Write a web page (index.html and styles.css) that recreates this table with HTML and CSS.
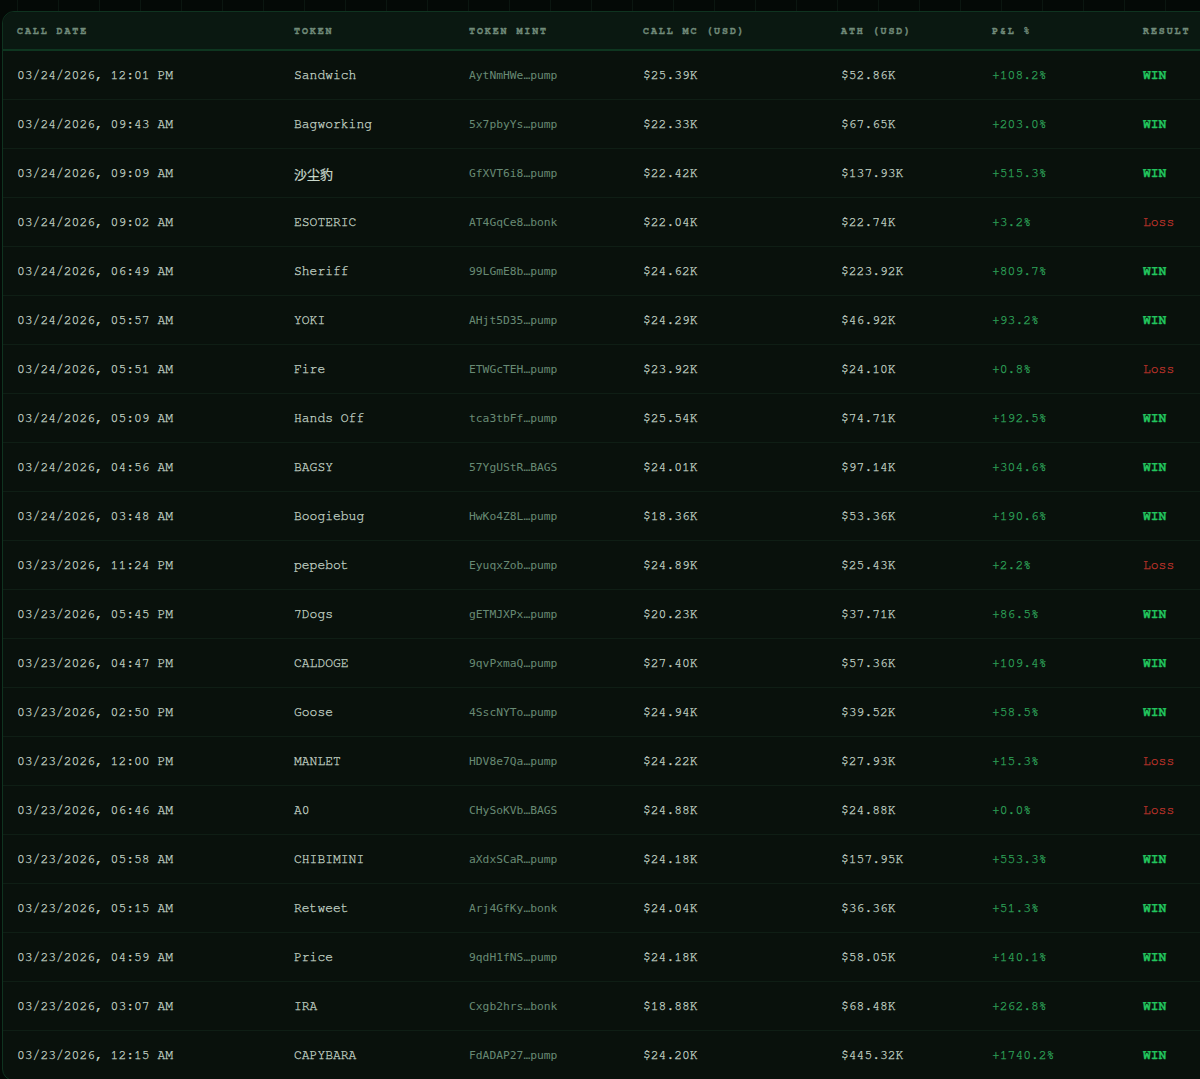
FILE: index.html
```html
<!DOCTYPE html>
<html lang="en">
<head>
<meta charset="utf-8">
<title>Calls</title>
<link rel="stylesheet" href="styles.css">
</head>
<body>
<div class="page">
  <div class="card">
    <table class="calls">
      <colgroup>
        <col class="c-date"><col class="c-token"><col class="c-mint"><col class="c-mc"><col class="c-ath"><col class="c-pnl"><col class="c-res">
      </colgroup>
      <thead>
        <tr><th>Call Date</th><th>Token</th><th>Token Mint</th><th>Call MC (USD)</th><th>ATH (USD)</th><th>P&amp;L %</th><th>Result</th></tr>
      </thead>
      <tbody>
        <tr><td>03/24/2026, 12:01 PM</td><td>Sandwich</td><td class="mint">AytNmHWe…pump</td><td>$25.39K</td><td>$52.86K</td><td class="pnl">+108.2%</td><td class="win">WIN</td></tr>
        <tr><td>03/24/2026, 09:43 AM</td><td>Bagworking</td><td class="mint">5x7pbyYs…pump</td><td>$22.33K</td><td>$67.65K</td><td class="pnl">+203.0%</td><td class="win">WIN</td></tr>
        <tr><td>03/24/2026, 09:09 AM</td><td>沙尘豹</td><td class="mint">GfXVT6i8…pump</td><td>$22.42K</td><td>$137.93K</td><td class="pnl">+515.3%</td><td class="win">WIN</td></tr>
        <tr><td>03/24/2026, 09:02 AM</td><td>ESOTERIC</td><td class="mint">AT4GqCe8…bonk</td><td>$22.04K</td><td>$22.74K</td><td class="pnl">+3.2%</td><td class="loss">Loss</td></tr>
        <tr><td>03/24/2026, 06:49 AM</td><td>Sheriff</td><td class="mint">99LGmE8b…pump</td><td>$24.62K</td><td>$223.92K</td><td class="pnl">+809.7%</td><td class="win">WIN</td></tr>
        <tr><td>03/24/2026, 05:57 AM</td><td>YOKI</td><td class="mint">AHjt5D35…pump</td><td>$24.29K</td><td>$46.92K</td><td class="pnl">+93.2%</td><td class="win">WIN</td></tr>
        <tr><td>03/24/2026, 05:51 AM</td><td>Fire</td><td class="mint">ETWGcTEH…pump</td><td>$23.92K</td><td>$24.10K</td><td class="pnl">+0.8%</td><td class="loss">Loss</td></tr>
        <tr><td>03/24/2026, 05:09 AM</td><td>Hands Off</td><td class="mint">tca3tbFf…pump</td><td>$25.54K</td><td>$74.71K</td><td class="pnl">+192.5%</td><td class="win">WIN</td></tr>
        <tr><td>03/24/2026, 04:56 AM</td><td>BAGSY</td><td class="mint">57YgUStR…BAGS</td><td>$24.01K</td><td>$97.14K</td><td class="pnl">+304.6%</td><td class="win">WIN</td></tr>
        <tr><td>03/24/2026, 03:48 AM</td><td>Boogiebug</td><td class="mint">HwKo4Z8L…pump</td><td>$18.36K</td><td>$53.36K</td><td class="pnl">+190.6%</td><td class="win">WIN</td></tr>
        <tr><td>03/23/2026, 11:24 PM</td><td>pepebot</td><td class="mint">EyuqxZob…pump</td><td>$24.89K</td><td>$25.43K</td><td class="pnl">+2.2%</td><td class="loss">Loss</td></tr>
        <tr><td>03/23/2026, 05:45 PM</td><td>7Dogs</td><td class="mint">gETMJXPx…pump</td><td>$20.23K</td><td>$37.71K</td><td class="pnl">+86.5%</td><td class="win">WIN</td></tr>
        <tr><td>03/23/2026, 04:47 PM</td><td>CALDOGE</td><td class="mint">9qvPxmaQ…pump</td><td>$27.40K</td><td>$57.36K</td><td class="pnl">+109.4%</td><td class="win">WIN</td></tr>
        <tr><td>03/23/2026, 02:50 PM</td><td>Goose</td><td class="mint">4SscNYTo…pump</td><td>$24.94K</td><td>$39.52K</td><td class="pnl">+58.5%</td><td class="win">WIN</td></tr>
        <tr><td>03/23/2026, 12:00 PM</td><td>MANLET</td><td class="mint">HDV8e7Qa…pump</td><td>$24.22K</td><td>$27.93K</td><td class="pnl">+15.3%</td><td class="loss">Loss</td></tr>
        <tr><td>03/23/2026, 06:46 AM</td><td>A0</td><td class="mint">CHySoKVb…BAGS</td><td>$24.88K</td><td>$24.88K</td><td class="pnl">+0.0%</td><td class="loss">Loss</td></tr>
        <tr><td>03/23/2026, 05:58 AM</td><td>CHIBIMINI</td><td class="mint">aXdxSCaR…pump</td><td>$24.18K</td><td>$157.95K</td><td class="pnl">+553.3%</td><td class="win">WIN</td></tr>
        <tr><td>03/23/2026, 05:15 AM</td><td>Retweet</td><td class="mint">Arj4GfKy…bonk</td><td>$24.04K</td><td>$36.36K</td><td class="pnl">+51.3%</td><td class="win">WIN</td></tr>
        <tr><td>03/23/2026, 04:59 AM</td><td>Price</td><td class="mint">9qdH1fNS…pump</td><td>$24.18K</td><td>$58.05K</td><td class="pnl">+140.1%</td><td class="win">WIN</td></tr>
        <tr><td>03/23/2026, 03:07 AM</td><td>IRA</td><td class="mint">Cxgb2hrs…bonk</td><td>$18.88K</td><td>$68.48K</td><td class="pnl">+262.8%</td><td class="win">WIN</td></tr>
        <tr><td>03/23/2026, 12:15 AM</td><td>CAPYBARA</td><td class="mint">FdADAP27…pump</td><td>$24.20K</td><td>$445.32K</td><td class="pnl">+1740.2%</td><td class="win">WIN</td></tr>
      </tbody>
    </table>
  </div>
</div>
</body>
</html>
```

FILE: styles.css
```css
html, body {
  margin: 0;
  padding: 0;
  background: #040906;
  overflow: hidden;
}

.page {
  min-height: 1079px;
  padding: 11px 0 0 2px;
  background-color: #040906;
  background-image: linear-gradient(to right, #0b1610 1px, transparent 1px);
  background-size: 41px 41px;
  background-position: 17px 0;
  font-family: FreeMono, "Courier New", "Noto Sans CJK SC", monospace;
}

.card {
  width: 1240px;
  background: #09110c;
  border: 1px solid #0f3320;
  border-radius: 12px;
  overflow: hidden;
}

.calls {
  width: 100%;
  border-collapse: collapse;
  table-layout: fixed;
  font-family: FreeMono, "Courier New", "Noto Sans CJK SC", monospace;
}

.c-date { width: 277px; }
.c-token { width: 175px; }
.c-mint { width: 174px; }
.c-mc { width: 198px; }
.c-ath { width: 151px; }
.c-pnl { width: 151px; }

.calls th {
  height: 37px;
  padding: 0 0 0 14px;
  background: #0a1811;
  border-bottom: 2px solid #0e3620;
  text-align: left;
  text-transform: uppercase;
  font-size: 10px;
  font-weight: 700;
  letter-spacing: 1.9px;
  color: #728c7b;
  white-space: nowrap;
  -webkit-text-stroke: 0.35px currentColor;
}

.calls td {
  box-sizing: border-box;
  height: 49px;
  padding: 1px 0 0 14px;
  border-bottom: 1px solid #0f1e15;
  font-size: 13px;
  color: #c8d8cb;
  white-space: nowrap;
  -webkit-text-stroke: 0.25px currentColor;
}

.calls td.mint {
  font-family: "DejaVu Sans Mono", monospace;
  font-size: 11.3px;
  color: #688a74;
  -webkit-text-stroke: 0;
}

.calls td.pnl {
  color: #2fa85c;
}

.calls td.win {
  color: #22c55e;
  font-weight: 700;
}

.calls td.loss {
  color: #c2352c;
}
```
